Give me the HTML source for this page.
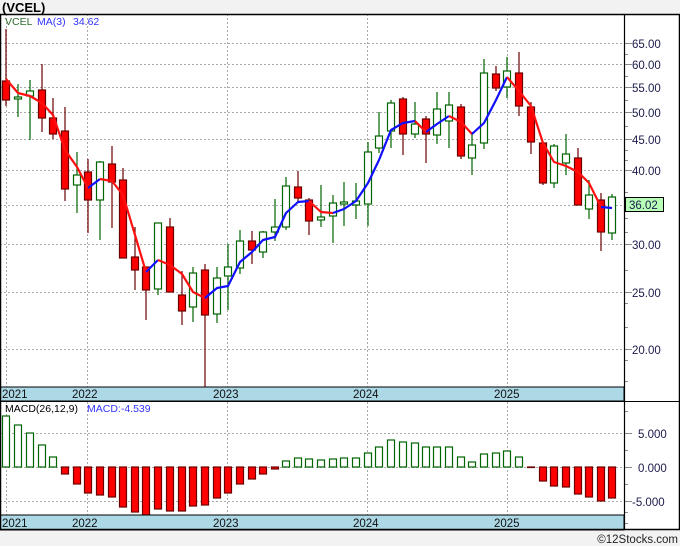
<!DOCTYPE html>
<html><head><meta charset="utf-8"><style>
html,body{margin:0;padding:0;background:#f2f2f2;}
svg{display:block;font-family:"Liberation Sans",sans-serif;}
</style></head><body>
<svg width="680" height="546" viewBox="0 0 680 546" xmlns="http://www.w3.org/2000/svg">
<rect x="0" y="0" width="680" height="546" fill="#f2f2f2"/>
<text x="2" y="12" font-size="13" font-weight="bold" fill="#000">(VCEL)</text>
<rect x="0" y="14" width="680" height="516" fill="#fff"/>
<!-- grid -->
<g stroke="#aaa" stroke-dasharray="2,2" stroke-width="1">
<line x1="0" y1="43.5" x2="624" y2="43.5"/><line x1="0" y1="64.5" x2="624" y2="64.5"/>
<line x1="0" y1="87.5" x2="624" y2="87.5"/><line x1="0" y1="112.5" x2="624" y2="112.5"/>
<line x1="0" y1="139.5" x2="624" y2="139.5"/><line x1="0" y1="170.5" x2="624" y2="170.5"/>
<line x1="0" y1="205.5" x2="624" y2="205.5"/><line x1="0" y1="244.5" x2="624" y2="244.5"/>
<line x1="0" y1="292.5" x2="624" y2="292.5"/><line x1="0" y1="349.5" x2="624" y2="349.5"/>
<line x1="0" y1="433.5" x2="624" y2="433.5"/><line x1="0" y1="467.5" x2="624" y2="467.5"/>
<line x1="0" y1="501.5" x2="624" y2="501.5"/>
<line x1="6.5" y1="14" x2="6.5" y2="530"/><line x1="87.5" y1="14" x2="87.5" y2="530"/>
<line x1="227.5" y1="14" x2="227.5" y2="530"/><line x1="367.5" y1="14" x2="367.5" y2="530"/>
<line x1="507.5" y1="14" x2="507.5" y2="530"/>
</g>
<!-- candles -->
<g id="c" stroke-width="1.3">
<script>/* placeholder */</script>
</g>
<g stroke-width="1.2">
<g stroke="#6b0000">
<line x1="6" y1="29" x2="6" y2="106"/><line x1="42" y1="64" x2="42" y2="132"/><line x1="53" y1="98" x2="53" y2="139"/><line x1="65" y1="107" x2="65" y2="201"/><line x1="88" y1="159" x2="88" y2="233"/><line x1="112" y1="146" x2="112" y2="228"/><line x1="123" y1="168" x2="123" y2="258"/><line x1="135" y1="227" x2="135" y2="290"/><line x1="146" y1="267" x2="146" y2="320"/><line x1="170" y1="218" x2="170" y2="292"/><line x1="182" y1="271" x2="182" y2="325"/><line x1="205" y1="264" x2="205" y2="387"/><line x1="252" y1="231" x2="252" y2="264"/><line x1="298" y1="171" x2="298" y2="202"/><line x1="309" y1="198" x2="309" y2="235"/><line x1="403" y1="97" x2="403" y2="155"/><line x1="426" y1="116" x2="426" y2="163"/><line x1="461" y1="104" x2="461" y2="159"/><line x1="496" y1="66" x2="496" y2="91"/><line x1="519" y1="52" x2="519" y2="116"/><line x1="531" y1="102" x2="531" y2="154"/><line x1="543" y1="143" x2="543" y2="185"/><line x1="578" y1="148" x2="578" y2="205"/><line x1="601" y1="193" x2="601" y2="251"/>
</g>
<g stroke="#006400">
<line x1="18" y1="84" x2="18" y2="117"/><line x1="30" y1="80" x2="30" y2="140"/><line x1="77" y1="152" x2="77" y2="213"/><line x1="100" y1="161" x2="100" y2="240"/><line x1="158" y1="223" x2="158" y2="295"/><line x1="193" y1="267" x2="193" y2="322"/><line x1="217" y1="267" x2="217" y2="323"/><line x1="228" y1="244" x2="228" y2="310"/><line x1="240" y1="230" x2="240" y2="274"/><line x1="263" y1="231" x2="263" y2="258"/><line x1="275" y1="199" x2="275" y2="241"/><line x1="286" y1="177" x2="286" y2="230"/><line x1="321" y1="185" x2="321" y2="227"/><line x1="333" y1="195" x2="333" y2="243"/><line x1="344" y1="182" x2="344" y2="226"/><line x1="356" y1="183" x2="356" y2="219"/><line x1="368" y1="142" x2="368" y2="226"/><line x1="379" y1="112" x2="379" y2="153"/><line x1="391" y1="100" x2="391" y2="148"/><line x1="415" y1="102" x2="415" y2="138"/><line x1="437" y1="92" x2="437" y2="144"/><line x1="449" y1="92" x2="449" y2="148"/><line x1="472" y1="132" x2="472" y2="175"/><line x1="484" y1="59" x2="484" y2="149"/><line x1="507" y1="57" x2="507" y2="98"/><line x1="554" y1="144" x2="554" y2="188"/><line x1="566" y1="134" x2="566" y2="175"/><line x1="589" y1="180" x2="589" y2="219"/><line x1="612" y1="194" x2="612" y2="240"/>
</g>
<g fill="#ff0000" stroke="#6b0000">
<rect x="2.5" y="81" width="7" height="19"/><rect x="38.5" y="90" width="7" height="28"/><rect x="49.5" y="118" width="7" height="16"/><rect x="61.5" y="131" width="7" height="58"/><rect x="84.5" y="172" width="7" height="28"/><rect x="108.5" y="164" width="7" height="18"/><rect x="119.5" y="180" width="7" height="78"/><rect x="131.5" y="257" width="7" height="13"/><rect x="142.5" y="267" width="7" height="23"/><rect x="166.5" y="227" width="7" height="65"/><rect x="178.5" y="295" width="7" height="16"/><rect x="201.5" y="270" width="7" height="45"/><rect x="248.5" y="241" width="7" height="9"/><rect x="294.5" y="187" width="7" height="11"/><rect x="305.5" y="200" width="7" height="21"/><rect x="399.5" y="99" width="7" height="35"/><rect x="422.5" y="119" width="7" height="15"/><rect x="457.5" y="107" width="7" height="49"/><rect x="492.5" y="74" width="7" height="14"/><rect x="515.5" y="73" width="7" height="33"/><rect x="527.5" y="107" width="7" height="35"/><rect x="539.5" y="143" width="7" height="40"/><rect x="574.5" y="158" width="7" height="47"/><rect x="597.5" y="200" width="7" height="32"/>
</g>
<g fill="#fff" stroke="#006400">
<rect x="14.5" y="97" width="7" height="2"/><rect x="26.5" y="91" width="7" height="5"/><rect x="73.5" y="175" width="7" height="10"/><rect x="96.5" y="162" width="7" height="38"/><rect x="154.5" y="223" width="7" height="66"/><rect x="189.5" y="273" width="7" height="34"/><rect x="213.5" y="278" width="7" height="36"/><rect x="224.5" y="267" width="7" height="9"/><rect x="236.5" y="241" width="7" height="27"/><rect x="259.5" y="232" width="7" height="20"/><rect x="271.5" y="227" width="7" height="5"/><rect x="282.5" y="186" width="7" height="41"/><rect x="317.5" y="217" width="7" height="3"/><rect x="329.5" y="203" width="7" height="13"/><rect x="340.5" y="202" width="7" height="2"/><rect x="352.5" y="201" width="7" height="4"/><rect x="364.5" y="152" width="7" height="52"/><rect x="375.5" y="136" width="7" height="12"/><rect x="387.5" y="103" width="7" height="28"/><rect x="411.5" y="124" width="7" height="10"/><rect x="433.5" y="109" width="7" height="26"/><rect x="445.5" y="105" width="7" height="16"/><rect x="468.5" y="145" width="7" height="13"/><rect x="480.5" y="73" width="7" height="70"/><rect x="503.5" y="71" width="7" height="16"/><rect x="550.5" y="146" width="7" height="37"/><rect x="562.5" y="154" width="7" height="9"/><rect x="585.5" y="195" width="7" height="14"/><rect x="608.5" y="197" width="7" height="36"/>
</g>
</g>
<!-- MA -->
<g fill="none" stroke-width="2.2" stroke-linejoin="round">
<polyline stroke="#ff1010" points="6,79 18,93 30,96 42,103 53,115 65,150 77,167 88,188"/>
<polyline stroke="#1010ff" points="88,188 100,179"/>
<polyline stroke="#ff1010" points="100,179 112,181 123,195 135,235 146,272"/>
<polyline stroke="#1010ff" points="146,272 158,260"/>
<polyline stroke="#ff1010" points="158,260 170,265 182,274 193,292 205,298"/>
<polyline stroke="#1010ff" points="205,298 217,288 228,286 240,262 252,252 263,240 275,237 286,213 298,202 309,201"/>
<polyline stroke="#ff1010" points="309,201 321,212 333,213"/>
<polyline stroke="#1010ff" points="333,213 344,209 356,201 368,183 379,160 391,130 403,123 415,121"/>
<polyline stroke="#ff1010" points="415,121 426,132"/>
<polyline stroke="#1010ff" points="426,132 437,124 449,116"/>
<polyline stroke="#ff1010" points="449,116 461,122 472,134"/>
<polyline stroke="#1010ff" points="472,134 484,123 496,100 507,77"/>
<polyline stroke="#ff1010" points="507,77 519,91 531,106 543,143 554,162 566,166 578,172 589,183 601,207"/>
<polyline stroke="#1010ff" points="601,207 612,208"/>
</g>
<text x="5" y="25" font-size="10.5" fill="#2e6b2e">VCEL</text>
<text x="37" y="25" font-size="10.5" fill="#3333ff">MA(3)</text>
<text x="73" y="25" font-size="10.5" fill="#3333ff">34.62</text>
<!-- MACD bars -->
<g stroke-width="1.2">
<g fill="#fff" stroke="#006400">
<rect x="2.5" y="416" width="7" height="51"/><rect x="14.5" y="425" width="7" height="42"/><rect x="26.5" y="433" width="7" height="34"/><rect x="38.5" y="445" width="7" height="22"/><rect x="49.5" y="457" width="7" height="10"/>
<rect x="282.5" y="461" width="7" height="6"/><rect x="294.5" y="458" width="7" height="9"/><rect x="305.5" y="459" width="7" height="8"/><rect x="317.5" y="460" width="7" height="7"/><rect x="329.5" y="459" width="7" height="8"/><rect x="340.5" y="458" width="7" height="9"/><rect x="352.5" y="458" width="7" height="9"/><rect x="364.5" y="453" width="7" height="14"/><rect x="375.5" y="447" width="7" height="20"/><rect x="387.5" y="440" width="7" height="27"/><rect x="399.5" y="442" width="7" height="25"/><rect x="411.5" y="443" width="7" height="24"/><rect x="422.5" y="447" width="7" height="20"/><rect x="433.5" y="447" width="7" height="20"/><rect x="445.5" y="447" width="7" height="20"/><rect x="457.5" y="457" width="7" height="10"/><rect x="468.5" y="462" width="7" height="5"/><rect x="480.5" y="454" width="7" height="13"/><rect x="492.5" y="453" width="7" height="14"/><rect x="503.5" y="451" width="7" height="16"/><rect x="515.5" y="457" width="7" height="10"/>
</g>
<g fill="#ff0000" stroke="#6b0000">
<rect x="61.5" y="467" width="7" height="7"/><rect x="73.5" y="467" width="7" height="17"/><rect x="84.5" y="467" width="7" height="26"/><rect x="96.5" y="467" width="7" height="28"/><rect x="108.5" y="467" width="7" height="30"/><rect x="119.5" y="467" width="7" height="40"/><rect x="131.5" y="467" width="7" height="45"/><rect x="142.5" y="467" width="7" height="48"/><rect x="154.5" y="467" width="7" height="42"/><rect x="166.5" y="467" width="7" height="44"/><rect x="178.5" y="467" width="7" height="44"/><rect x="189.5" y="467" width="7" height="39"/><rect x="201.5" y="467" width="7" height="38"/><rect x="213.5" y="467" width="7" height="31"/><rect x="224.5" y="467" width="7" height="26"/><rect x="236.5" y="467" width="7" height="17"/><rect x="248.5" y="467" width="7" height="12"/><rect x="259.5" y="467" width="7" height="7"/><rect x="271.5" y="467" width="7" height="2"/>
<rect x="527.5" y="467" width="7" height="0.5"/><rect x="539.5" y="467" width="7" height="14"/><rect x="550.5" y="467" width="7" height="19"/><rect x="562.5" y="467" width="7" height="20"/><rect x="574.5" y="467" width="7" height="27"/><rect x="585.5" y="467" width="7" height="30"/><rect x="597.5" y="467" width="7" height="34"/><rect x="608.5" y="467" width="7" height="31"/>
</g>
</g>
<text x="5" y="412" font-size="10.5" fill="#000">MACD(26,12,9)</text>
<text x="87" y="412" font-size="10.5" fill="#3333ff">MACD:-4.539</text>
<!-- axis bands -->
<rect x="0" y="387" width="624" height="14" fill="#add8e6" stroke="#000" stroke-width="1"/>
<rect x="0" y="515" width="624" height="15" fill="#add8e6" stroke="#000" stroke-width="1"/>
<g font-size="11.5" fill="#111">
<text x="2" y="398">2021</text><text x="72" y="398">2022</text><text x="213" y="398">2023</text><text x="353" y="398">2024</text><text x="494" y="398">2025</text>
<text x="2" y="527">2021</text><text x="72" y="527">2022</text><text x="213" y="527">2023</text><text x="353" y="527">2024</text><text x="494" y="527">2025</text>
</g>
<!-- right axis -->
<g stroke="#888" stroke-width="1">
<line x1="624" y1="43.5" x2="632" y2="43.5"/><line x1="624" y1="54.5" x2="628" y2="54.5"/><line x1="624" y1="64.5" x2="632" y2="64.5"/><line x1="624" y1="76.5" x2="628" y2="76.5"/><line x1="624" y1="87.5" x2="632" y2="87.5"/><line x1="624" y1="100.5" x2="628" y2="100.5"/><line x1="624" y1="112.5" x2="632" y2="112.5"/><line x1="624" y1="126.5" x2="628" y2="126.5"/><line x1="624" y1="139.5" x2="632" y2="139.5"/><line x1="624" y1="150.5" x2="628" y2="150.5"/><line x1="624" y1="160.5" x2="628" y2="160.5"/><line x1="624" y1="170.5" x2="632" y2="170.5"/><line x1="624" y1="192.5" x2="628" y2="192.5"/><line x1="624" y1="218.5" x2="628" y2="218.5"/><line x1="624" y1="232.5" x2="628" y2="232.5"/><line x1="624" y1="244.5" x2="632" y2="244.5"/><line x1="624" y1="270.5" x2="628" y2="270.5"/><line x1="624" y1="292.5" x2="632" y2="292.5"/><line x1="624" y1="303.5" x2="628" y2="303.5"/><line x1="624" y1="327.5" x2="628" y2="327.5"/><line x1="624" y1="349.5" x2="632" y2="349.5"/><line x1="624" y1="360.5" x2="628" y2="360.5"/><line x1="624" y1="381.5" x2="628" y2="381.5"/>
<line x1="624" y1="411.5" x2="628" y2="411.5"/><line x1="624" y1="433.5" x2="632" y2="433.5"/><line x1="624" y1="450.5" x2="628" y2="450.5"/><line x1="624" y1="467.5" x2="632" y2="467.5"/><line x1="624" y1="484.5" x2="628" y2="484.5"/><line x1="624" y1="501.5" x2="632" y2="501.5"/><line x1="624" y1="512.5" x2="628" y2="512.5"/><line x1="624" y1="523.5" x2="628" y2="523.5"/>
</g>
<g font-size="11.5" fill="#1a1a4a">
<text x="632" y="48">65.00</text><text x="632" y="69">60.00</text><text x="632" y="92">55.00</text><text x="632" y="117">50.00</text><text x="632" y="144">45.00</text><text x="632" y="175">40.00</text><text x="632" y="249">30.00</text><text x="632" y="297">25.00</text><text x="632" y="354">20.00</text>
<text x="638" y="438">5.000</text><text x="638" y="472">0.000</text><text x="632" y="506">-5.000</text>
</g>
<rect x="625.5" y="197.5" width="38" height="14" fill="#b8ffb8" stroke="#000" stroke-width="1"/>
<text x="629" y="209" font-size="11.5" fill="#1a1a4a">36.02</text>
<!-- frame -->
<rect x="0.5" y="14.5" width="679" height="515" fill="none" stroke="#000" stroke-width="1.5"/>
<line x1="624.5" y1="14" x2="624.5" y2="530" stroke="#000" stroke-width="1.2"/>
<line x1="0" y1="401.5" x2="680" y2="401.5" stroke="#000" stroke-width="1"/>
<text x="678" y="543" font-size="11.5" fill="#222" text-anchor="end">©12Stocks.com</text>
</svg>
</body></html>
